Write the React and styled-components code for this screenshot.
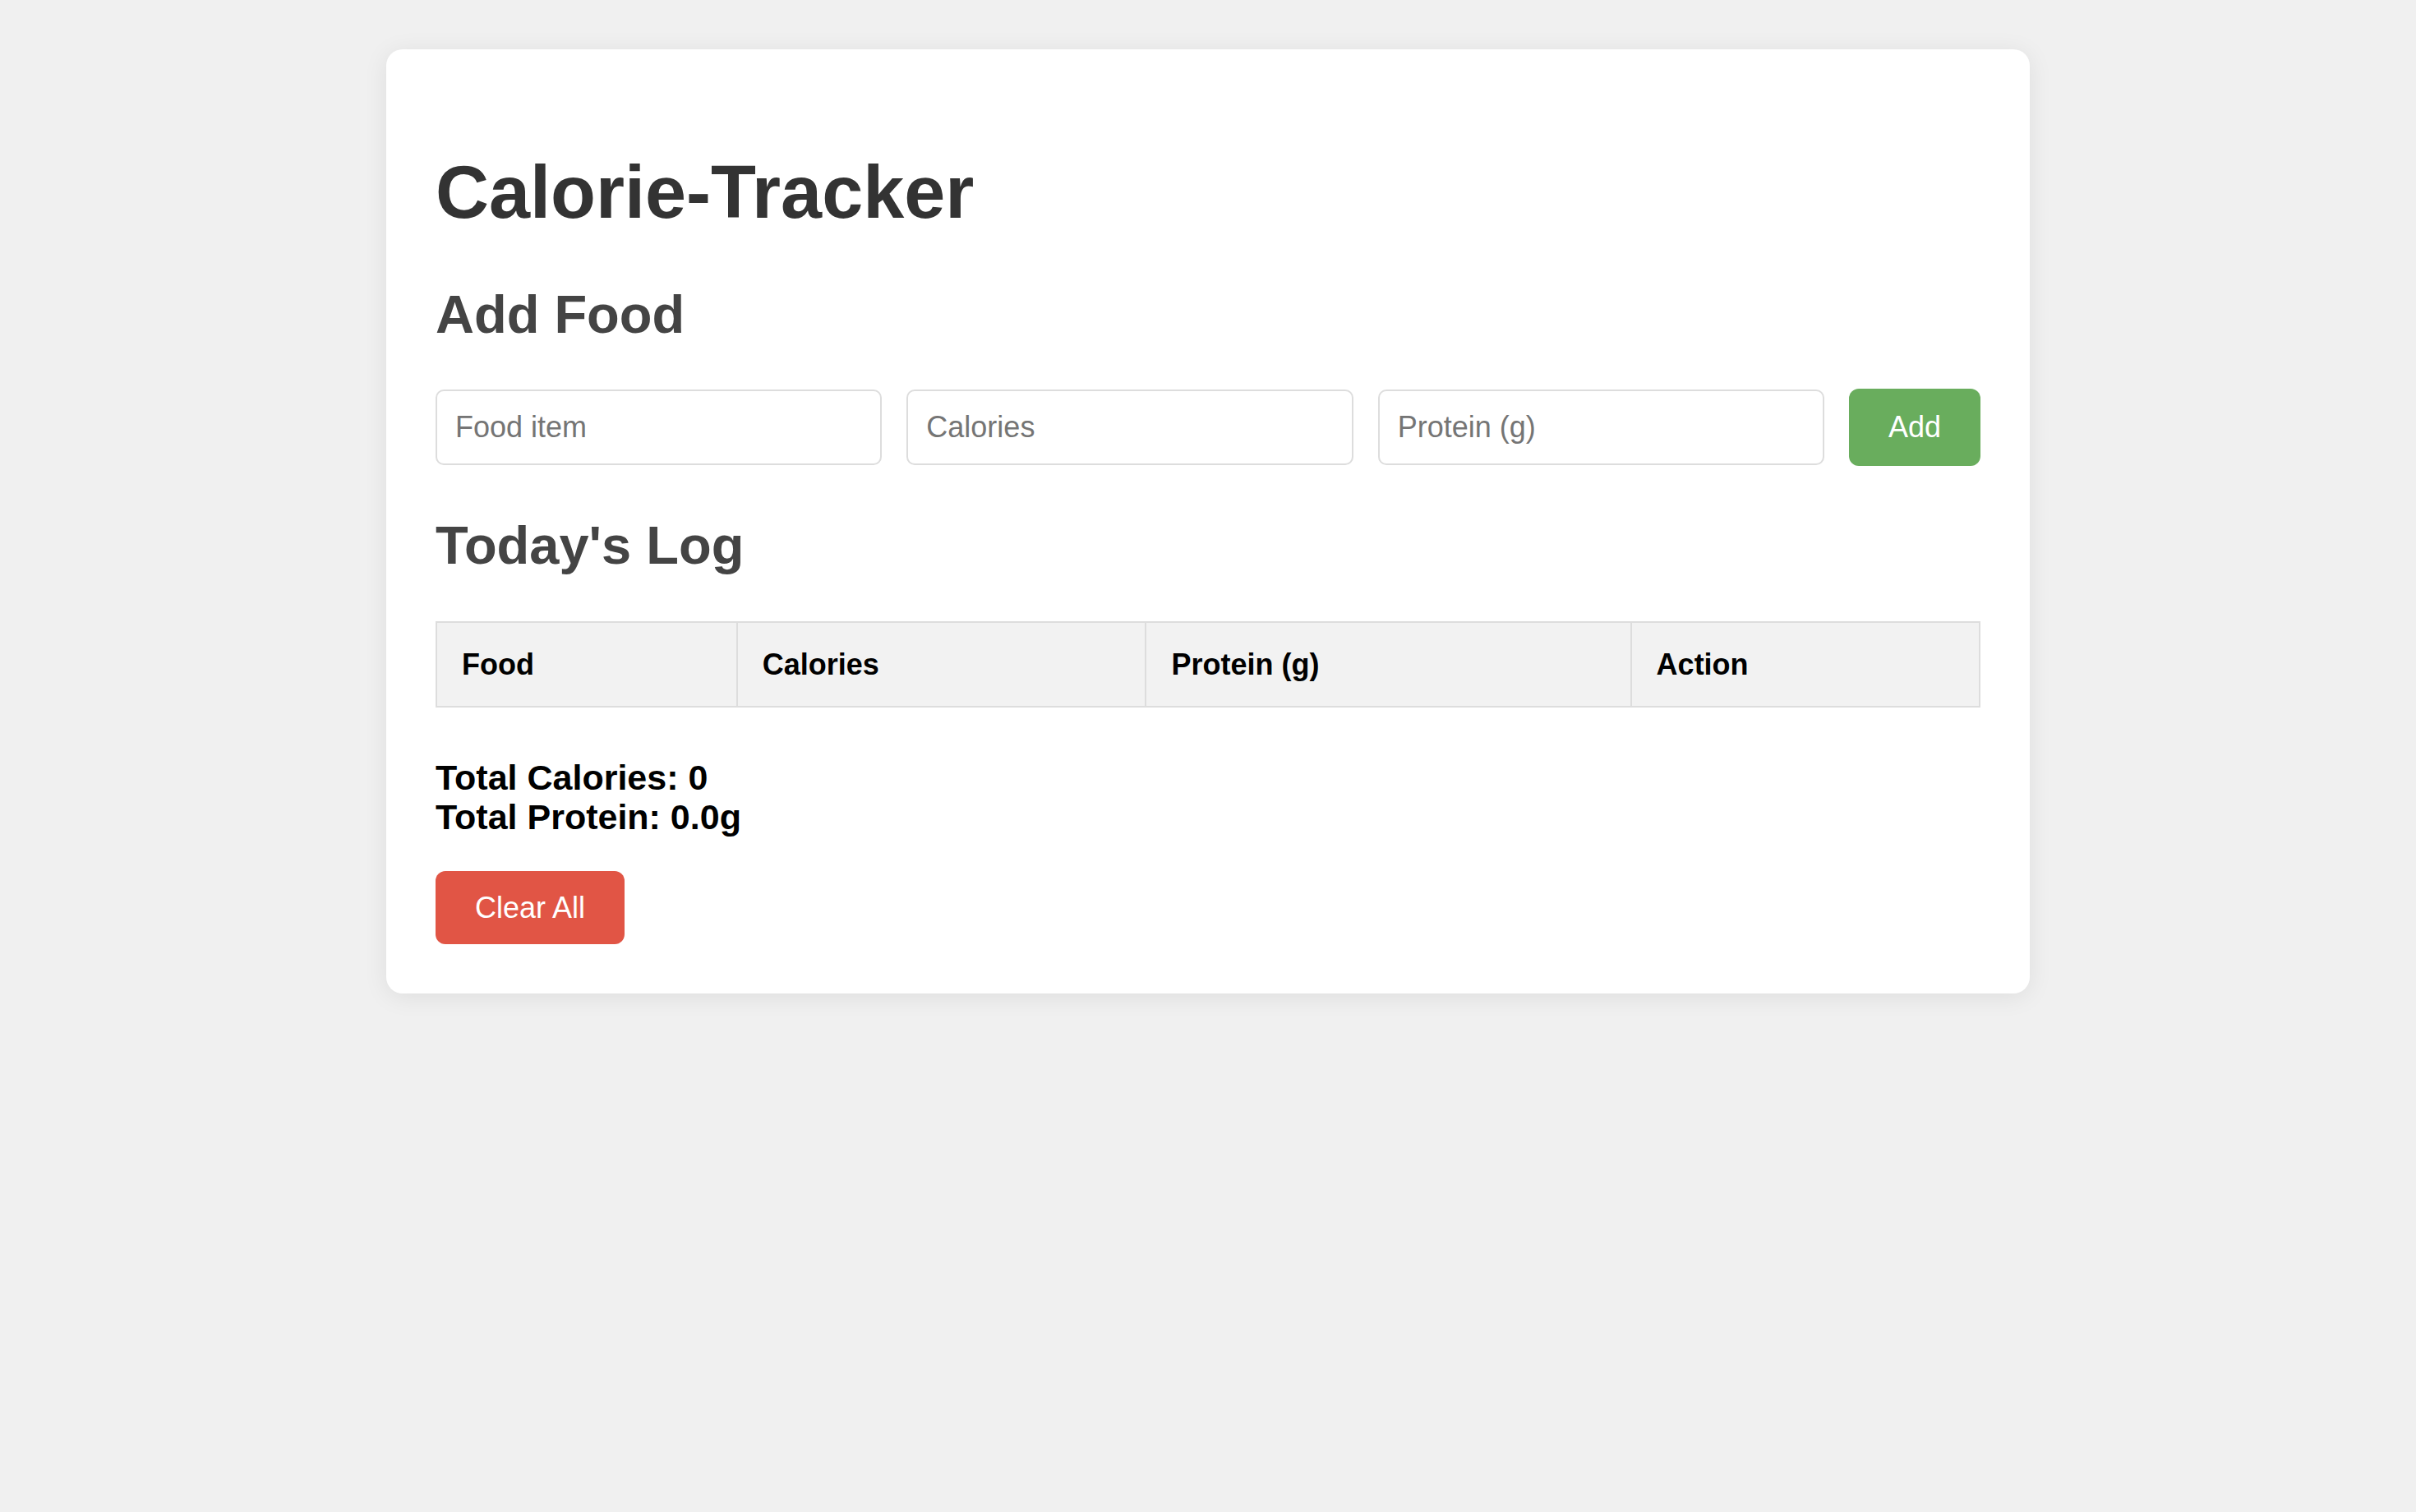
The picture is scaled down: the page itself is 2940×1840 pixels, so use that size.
import React from 'react';
import styled, { createGlobalStyle } from 'styled-components';

const GlobalStyle = createGlobalStyle`
    * {
        box-sizing: border-box;
    }

    body {
        margin: 0;
        padding: 60px 0;
        background: #f0f0f0;
        font-family: "Liberation Sans", Arial, sans-serif;
    }
`

const columns = ['Food', 'Calories', 'Protein (g)', 'Action'];

export default function App() {
    return (
        <>
            <GlobalStyle />
            <Card>
                <Title>Calorie-Tracker</Title>

                <Heading>Add Food</Heading>
                <FormRow>
                    <Field type="text" placeholder="Food item" />
                    <Field type="number" placeholder="Calories" />
                    <Field type="number" placeholder="Protein (g)" />
                    <ActionButton tone="green" wide>Add</ActionButton>
                </FormRow>

                <Heading>Today's Log</Heading>
                <LogTable>
                    <thead>
                        <tr>
                            {columns.map(col => <Th key={col}>{col}</Th>)}
                        </tr>
                    </thead>
                    <tbody />
                </LogTable>

                <Totals>
                    <div>Total Calories: 0</div>
                    <div>Total Protein: 0.0g</div>
                </Totals>

                <ActionButton tone="red">Clear All</ActionButton>
            </Card>
        </>
    )
}

const Card = styled.div`
    width: 2000px;
    margin: 0 auto;
    padding: 60px;
    background: #fff;
    border-radius: 20px;
    box-shadow: 0 4px 30px rgba(0, 0, 0, 0.08);
`

const Title = styled.h1`
    margin: 60px 0 56px;
    font-size: 90px;
    line-height: 1.2;
    font-weight: bold;
    color: #333;
`

const Heading = styled.h2`
    margin: 0 0 51px;
    font-size: 65px;
    line-height: 1.2;
    font-weight: bold;
    color: #444;
`

const FormRow = styled.div`
    display: flex;
    align-items: center;
    gap: 30px;
    margin-bottom: 58px;
`

const Field = styled.input`
    flex: 1;
    min-width: 0;
    height: 92px;
    padding: 0 22px;
    border: 2px solid #ddd;
    border-radius: 10px;
    font-family: inherit;
    font-size: 36px;
    color: #333;
    outline: none;

    &::placeholder {
        color: #757575;
    }

    &::-webkit-inner-spin-button,
    &::-webkit-outer-spin-button {
        -webkit-appearance: none;
        margin: 0;
    }
`

const tones = {
    green: '#69ad5d',
    red: '#e15545',
};

const ActionButton = styled.button`
    display: block;
    width: ${props => (props.wide ? '160px' : '230px')};
    height: ${props => (props.wide ? '94px' : '89px')};
    padding: 0;
    border: none;
    border-radius: 12px;
    background: ${props => tones[props.tone]};
    color: #fff;
    font-family: inherit;
    font-size: 36px;
    cursor: pointer;
`

const LogTable = styled.table`
    width: 100%;
    margin-top: 53px;
    border-collapse: collapse;
`

const Th = styled.th`
    padding: 30px;
    border: 2px solid #ddd;
    background: #f2f2f2;
    text-align: left;
    font-size: 36px;
    line-height: 1.15;
    font-weight: bold;
    color: #000;
`

const Totals = styled.div`
    margin: 61px 0 42px;
    font-size: 43px;
    line-height: 48px;
    font-weight: bold;
    color: #000;
`
